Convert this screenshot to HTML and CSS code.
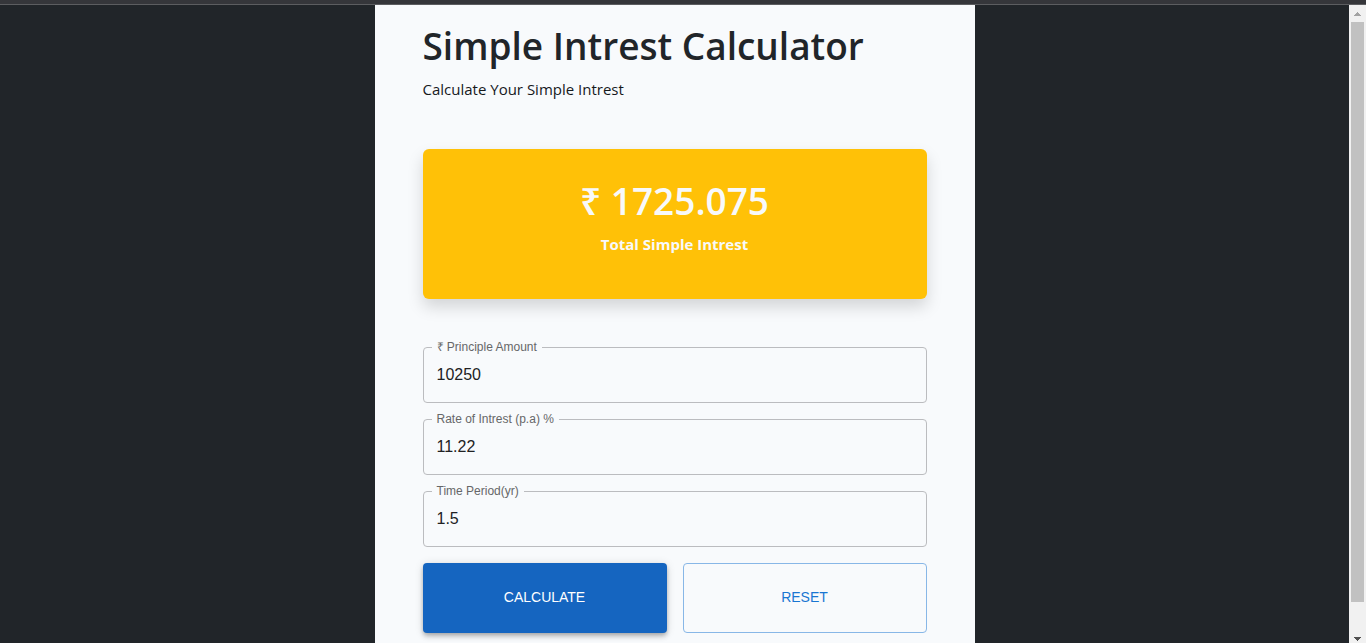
FILE: index.html
```html
<!DOCTYPE html>
<html lang="en">
<head>
<meta charset="utf-8">
<meta name="viewport" content="width=device-width, initial-scale=1">
<title>Simple Intrest Calculator</title>
<link rel="stylesheet" href="styles.css">
</head>
<body>
<div class="browser-edge"></div>
<div class="viewport">
  <main class="page">
    <div class="panel">
      <header class="heading">
        <h1 class="title">Simple Intrest Calculator</h1>
        <p class="subtitle">Calculate Your Simple Intrest</p>
      </header>
      <section class="result">
        <h2 class="amount">₹ 1725.075</h2>
        <p class="caption">Total Simple Intrest</p>
      </section>
      <form class="form">
        <div class="field">
          <label class="label" for="principle">₹ Principle Amount</label>
          <input class="input" id="principle" type="text" value="10250">
        </div>
        <div class="field">
          <label class="label" for="rate">Rate of Intrest (p.a) %</label>
          <input class="input" id="rate" type="text" value="11.22">
        </div>
        <div class="field">
          <label class="label" for="period">Time Period(yr)</label>
          <input class="input" id="period" type="text" value="1.5">
        </div>
        <div class="actions">
          <button class="button primary" type="button">CALCULATE</button>
          <button class="button outlined" type="button">RESET</button>
        </div>
      </form>
    </div>
  </main>
  <div class="scrollbar" aria-hidden="true">
    <svg class="arrow" viewBox="0 0 17 17" shape-rendering="crispEdges"><path fill="#a3a3a3" d="M8 7h1v1h1v1h1v1h1v1H5v-1h1V9h1V8h1z"/></svg>
    <div class="track"><div class="thumb"></div></div>
    <svg class="arrow" viewBox="0 0 17 17" shape-rendering="crispEdges"><path fill="#505050" d="M5 11h7v1h-1v1h-1v1H9v1H8v-1H7v-1H6v-1H5z"/></svg>
  </div>
</div>
</body>
</html>
```
FILE: styles.css
```css
* { box-sizing: border-box; }

body {
  display: flex;
  flex-direction: column;
  height: 100vh;
  margin: 0;
  overflow: hidden;
  background: #212529;
  color: #212529;
  font-family: "Open Sans", "Noto Sans", sans-serif;
}

.browser-edge {
  flex: none;
  height: 5px;
  background: #35363a;
  border-bottom: 1px solid #5c5d60;
}

.viewport {
  display: flex;
  flex: 1;
  min-height: 0;
}

.page {
  display: flex;
  flex: 1;
  justify-content: center;
  overflow: hidden;
}

.panel {
  width: 100%;
  max-width: 600px;
  min-height: 100%;
  height: max-content;
  padding: 17px 48px 48px;
  background: #f8fafc;
}

.title {
  margin: 0 0 8px;
  font-size: 37px;
  font-weight: 600;
  line-height: 48px;
}

.subtitle {
  margin: 0;
  color: #16191c;
  font-size: 15px;
  font-weight: 400;
  line-height: 22px;
}

.result {
  display: flex;
  flex-direction: column;
  align-items: center;
  justify-content: center;
  height: 150px;
  margin-top: 49px;
  padding-bottom: 15px;
  border-radius: 6px;
  background: #ffc107;
  box-shadow: 0 8px 16px rgba(0, 0, 0, 0.15);
  color: #f8f9fa;
}

.amount {
  margin: 0 0 7px;
  font-size: 37px;
  font-weight: 600;
  line-height: 48px;
}

.caption {
  margin: 0;
  font-size: 15px;
  font-weight: 700;
  line-height: 24px;
}

.form {
  display: flex;
  flex-direction: column;
  gap: 16px;
  margin-top: 48px;
  font-family: "Liberation Sans", Arial, sans-serif;
}

.field { position: relative; }

.label {
  position: absolute;
  top: -8px;
  left: 9px;
  padding: 0 5px;
  background: #f8fafc;
  color: #666768;
  font-size: 12px;
  line-height: 16px;
}

.input {
  display: block;
  width: 100%;
  height: 56px;
  padding: 0 13px;
  border: 1px solid #bbbcbf;
  border-radius: 4px;
  background: transparent;
  color: #212123;
  font-family: inherit;
  font-size: 16px;
}

.actions {
  display: grid;
  grid-template-columns: 1fr 1fr;
  gap: 16px;
}

.button {
  height: 70px;
  padding: 0 0 2px;
  border: 0;
  border-radius: 4px;
  font-family: inherit;
  font-size: 14px;
}

.primary {
  background: #1565c0;
  box-shadow: 0 2px 4px -1px rgba(0, 0, 0, 0.2), 0 4px 5px rgba(0, 0, 0, 0.14), 0 1px 10px rgba(0, 0, 0, 0.12);
  color: #fff;
}

.outlined {
  border: 1px solid #88b7e7;
  background: transparent;
  color: #1976d2;
}

.scrollbar {
  display: flex;
  flex: none;
  flex-direction: column;
  width: 17px;
  background: #f1f1f1;
}

.arrow {
  flex: none;
  width: 17px;
  height: 17px;
}

.track {
  flex: 1;
  padding: 0 2px;
}

.thumb {
  height: 96%;
  background: #c1c1c1;
}
```
